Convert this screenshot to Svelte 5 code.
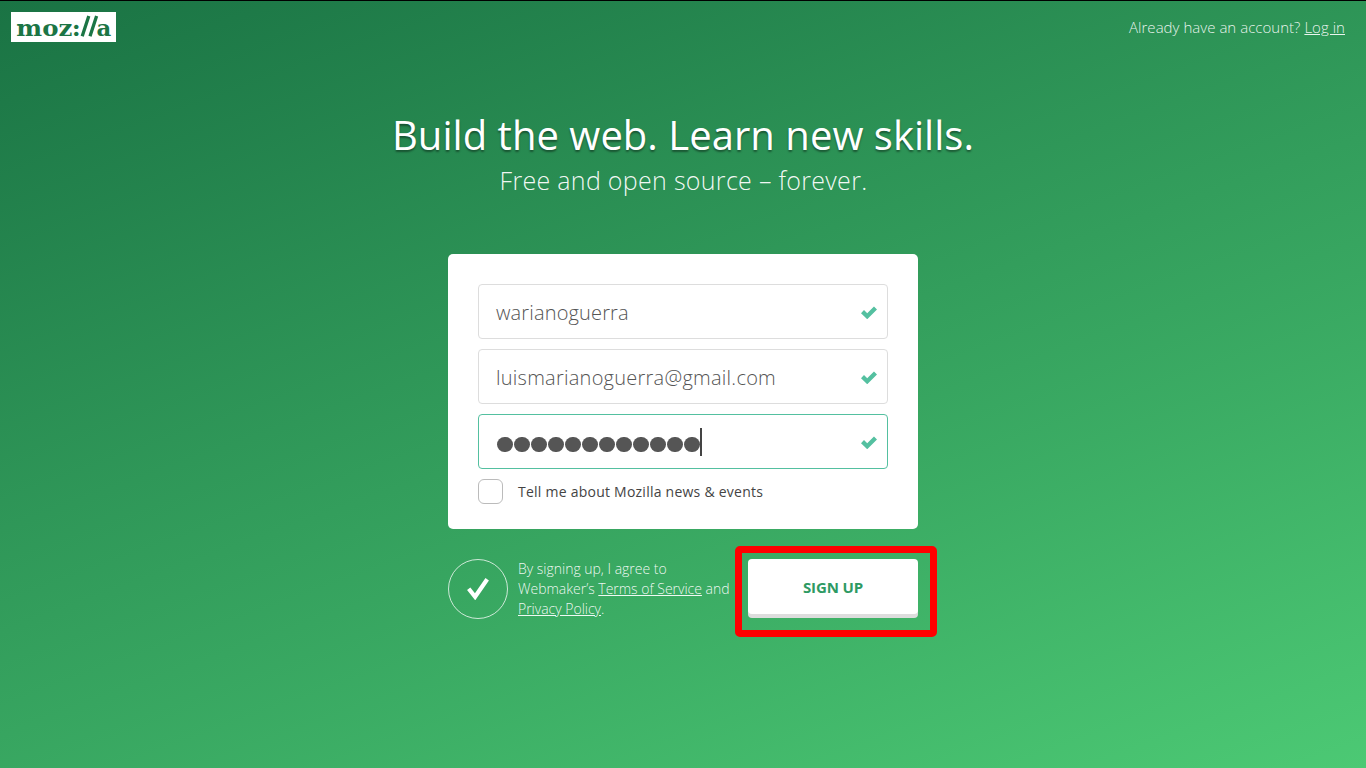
<script>
  const dots = Array.from({ length: 12 });
</script>

{#snippet tick()}
  <svg class="tick" viewBox="0 0 16 13" width="16" height="13" aria-hidden="true">
    <path d="M1.5 5.6 L6.2 10.2 L14.5 1.9" fill="none" stroke="#54c0a0" stroke-width="4.3" />
  </svg>
{/snippet}

<div class="page">
  <header>
    <svg class="logo" width="105" height="30" viewBox="0 0 105 30" role="img" aria-label="mozilla">
      <rect width="105" height="30" fill="#fff" />
      <text x="5.3" y="23.7" textLength="56" lengthAdjust="spacingAndGlyphs">moz</text>
      <text x="60.8" y="23.7" textLength="9" lengthAdjust="spacingAndGlyphs">:</text>
      <path d="M71.2 24.2 L77.8 4 M79 24.2 L85.6 4" stroke="#1b7545" stroke-width="3.3" />
      <text x="85.6" y="23.7" textLength="14.8" lengthAdjust="spacingAndGlyphs">a</text>
    </svg>
    <div class="login">Already have an account? <a href="#login">Log in</a></div>
  </header>

  <h1>Build the web. Learn new skills.</h1>
  <h2>Free and open source – forever.</h2>

  <div class="card">
    <div class="field"><span class="name">warianoguerra</span>{@render tick()}</div>
    <div class="field"><span class="mail">luismarianoguerra@gmail.com</span>{@render tick()}</div>
    <div class="field focus">
      <div class="dots">
        {#each dots as _}<i></i>{/each}
        <b></b>
      </div>
      {@render tick()}
    </div>
    <label><span class="box"></span>Tell me about Mozilla news &amp; events</label>
  </div>

  <footer>
    <div class="circle">
      <svg width="22" height="22" viewBox="0 0 22 22" aria-hidden="true">
        <path d="M1.7 10.8 L8.1 18.8 L20.2 1.2" fill="none" stroke="#fff" stroke-width="4.2" />
      </svg>
    </div>
    <p>By signing up, I agree to<br />Webmaker’s <a href="#terms">Terms of Service</a> and<br /><a href="#privacy">Privacy Policy</a>.</p>
    <button>SIGN UP<span class="mark"></span></button>
  </footer>
</div>

<style>
  :global(body) { margin: 0; }
  .page {
    box-sizing: border-box;
    width: 1366px;
    height: 768px;
    overflow: hidden;
    border-top: 1px solid #000;
    background: linear-gradient(160deg, #1a7344 0%, #4cc974 100%);
    font-family: "Open Sans", sans-serif;
    font-weight: 300;
    color: #fff;
  }
  header {
    display: flex;
    justify-content: space-between;
    padding: 11px 21px 0 11px;
    height: 91px;
  }
  .logo text {
    font: bold 22.5px "DejaVu Serif", serif;
    fill: #1b7545;
  }
  .login {
    font-size: 15px;
    line-height: 30px;
    letter-spacing: 0.03px;
    color: rgba(255, 255, 255, 0.9);
  }
  a { color: inherit; text-decoration: underline; }
  h1 {
    margin: 4px 0 1px;
    text-align: center;
    font-size: 40px;
    line-height: 55px;
    font-weight: 400;
    letter-spacing: 0.03px;
    text-shadow: 0 2px 2px rgba(0, 0, 0, 0.4);
  }
  h2 {
    margin: 0;
    padding-left: 1px;
    text-align: center;
    font-size: 25px;
    line-height: 34px;
    font-weight: 300;
    letter-spacing: 0.3px;
    color: rgba(255, 255, 255, 0.95);
  }
  .card {
    box-sizing: border-box;
    width: 470px;
    height: 275px;
    margin: 57px auto 0;
    padding: 30px;
    display: flex;
    flex-direction: column;
    gap: 10px;
    background: #fff;
    border-radius: 5px;
  }
  .field {
    box-sizing: border-box;
    height: 55px;
    flex: none;
    display: flex;
    align-items: center;
    justify-content: space-between;
    padding: 0 10px 0 17px;
    border: 1px solid #ddd;
    border-radius: 4px;
    font-size: 20px;
    color: #555;
  }
  .name, .mail { padding-top: 2px; }
  .name { letter-spacing: 0.15px; }
  .mail { letter-spacing: 0.25px; }
  .focus { border-color: #54c0a0; }
  .tick { margin-top: 2px; }
  .dots { display: flex; align-items: center; padding-left: 1px; }
  .dots i {
    width: 15.5px;
    height: 15.5px;
    margin: 6px 1.5px 0 0;
    border-radius: 50%;
    background: #555;
  }
  .dots b { width: 2px; height: 28px; margin-left: -1px; background: #444; }
  label {
    display: flex;
    align-items: center;
    gap: 15px;
    font-size: 14px;
    font-weight: 400;
    letter-spacing: 0.24px;
    color: #444;
  }
  .box {
    box-sizing: border-box;
    width: 25px;
    height: 25px;
    border: 1px solid #bbb;
    border-radius: 6px;
  }
  footer {
    display: flex;
    width: 470px;
    margin: 30px auto 0;
  }
  .circle {
    box-sizing: border-box;
    width: 60px;
    height: 60px;
    display: flex;
    align-items: center;
    justify-content: center;
    border: 1px solid rgba(255, 255, 255, 0.75);
    border-radius: 50%;
  }
  p {
    margin: 0 0 0 10px;
    font-size: 14px;
    line-height: 20px;
    letter-spacing: -0.01px;
    white-space: nowrap;
    color: rgba(255, 255, 255, 0.92);
  }
  button {
    position: relative;
    width: 170px;
    height: 55px;
    padding: 0;
    margin-left: auto;
    border: 0;
    border-radius: 4px;
    background: #fff;
    box-shadow: 0 4px 0 #ddd;
    font: 700 15px "Open Sans", sans-serif;
    letter-spacing: -0.1px;
    color: #2e9a63;
  }
  .mark {
    position: absolute;
    box-sizing: border-box;
    left: -13px;
    top: -13px;
    width: 202px;
    height: 91px;
    border: 7px solid #f00;
    border-radius: 5px;
  }
</style>
